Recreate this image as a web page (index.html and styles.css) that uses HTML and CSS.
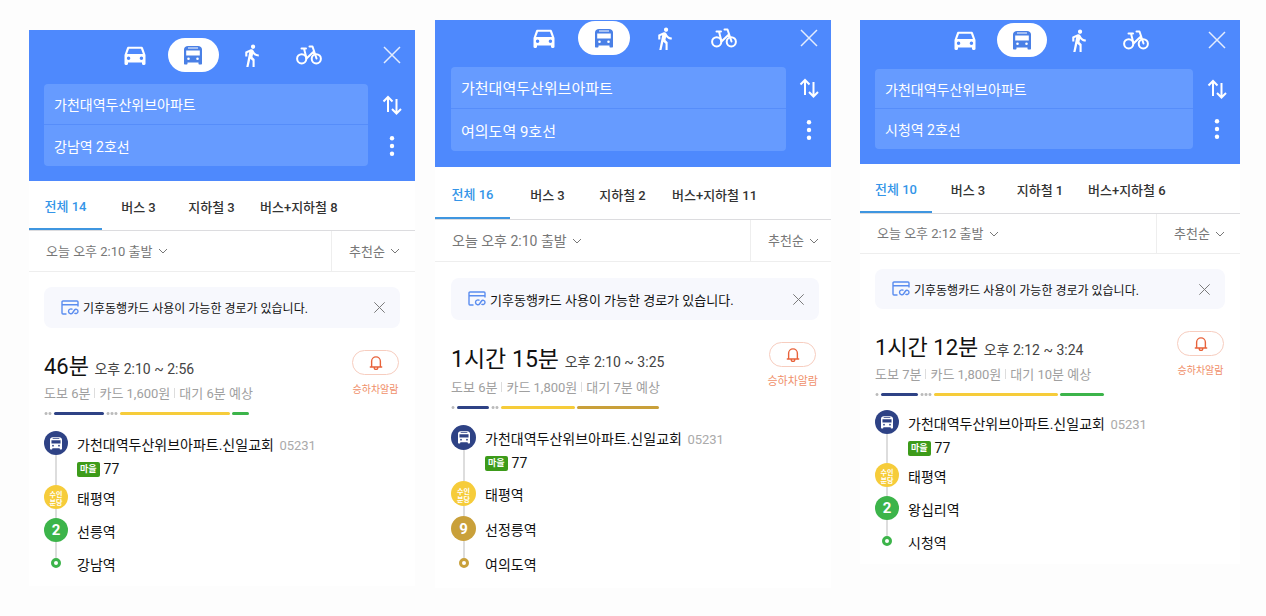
FILE: index.html
```html
<!DOCTYPE html>
<html lang="ko">
<head>
  <meta charset="UTF-8" />
  <meta name="viewport" content="width=device-width, initial-scale=1" />
  <title>길찾기 - 대중교통 경로 비교</title>
  <link rel="stylesheet" href="styles.css">
</head>
<body>
  <!-- 공용 아이콘 -->
  <svg class="sprite" aria-hidden="true">
    <symbol id="i-car" viewBox="0 0 24 24"><path fill="currentColor" fill-rule="evenodd" d="M18.900 6c-.2-.6-.8-1-1.400-1h-11c-.7 0-1.200.4-1.400 1L3 12v7.500c0 .6.4 1 1 1h1c.6 0 1-.4 1-1V18.500h12v1c0 .6.4 1 1 1h1c.6 0 1-.4 1-1V12zM6.500 16.200a1.500 1.500 0 1 1 0-3 1.500 1.500 0 0 1 0 3zm11 0a1.500 1.500 0 1 1 0-3 1.500 1.500 0 0 1 0 3zM5.200 11.200L6.900 6.700h10.200l1.700 4.500z"/></symbol>
    <symbol id="i-bus" viewBox="0 0 18 19"><path fill="currentColor" fill-rule="evenodd" d="M4 0h10c2.200 0 4 1.500 4 3.500V17.500c0 .6-.4 1-1 1h-1.500c-.6 0-1-.4-1-1V16.500h-11v1c0 .6-.4 1-1 1H1c-.6 0-1-.4-1-1V3.500C0 1.500 1.800 0 4 0zM4 1.600v1h10v-1zM2.200 4.500v5h13.600v-5zM4.500 11.500a1.300 1.300 0 1 0 0 2.600 1.300 1.300 0 0 0 0-2.600zm9 0a1.300 1.300 0 1 0 0 2.600 1.300 1.300 0 0 0 0-2.600z"/></symbol>
    <symbol id="i-walk" viewBox="0 0 24 24"><path fill="currentColor" d="M13.500 5.500c1.100 0 2-.9 2-2s-.9-2-2-2-2 .9-2 2 .9 2 2 2zM9.800 8.900L7 23h2.100l1.800-8 2.100 2v6h2v-7.500l-2.100-2 .6-3C14.800 12 16.800 13 19 13v-2c-1.900 0-3.500-1-4.300-2.400l-1-1.600c-.4-.6-1-1-1.700-1-.3 0-.5.1-.8.1L6 8.300V13h2V9.600z"/></symbol>
    <symbol id="i-bike" viewBox="0 0 26 20"><g fill="none" stroke="currentColor" stroke-width="2" stroke-linecap="round" stroke-linejoin="round"><circle cx="5.700" cy="13.800" r="4.600"/><circle cx="20.300" cy="13.800" r="4.600"/><path d="M5.500 3.500h4.500M8 3.500l2.500 10L17.300 7M13.500 1.500h3l4 12"/></g></symbol>
    <symbol id="i-close" viewBox="0 0 20 20"><path fill="none" stroke="currentColor" d="M2 2l16 16M18 2L2 18"/></symbol>
    <symbol id="i-swap" viewBox="0 0 20 20"><path fill="none" stroke="currentColor" stroke-width="2" d="M6 17V2M1.500 6.500L6 2l4.500 4.500M14.500 4v14.500M10 14l4.500 4.500L19 14"/></symbol>
    <symbol id="i-more" viewBox="0 0 20 20"><g fill="currentColor"><circle cx="10" cy="2.300" r="2.200"/><circle cx="10" cy="10" r="2.200"/><circle cx="10" cy="17.700" r="2.200"/></g></symbol>
    <symbol id="i-down" viewBox="0 0 10 10"><path fill="none" stroke="currentColor" d="M1 3l4 4 4-4"/></symbol>
    <symbol id="i-card" viewBox="0 0 18 16"><g fill="none" stroke="currentColor" stroke-width="1.400"><path d="M5.500 14H2a1 1 0 0 1-1-1V2a1 1 0 0 1 1-1h14a1 1 0 0 1 1 1v4.500M1 4.800h16"/><path d="M11.500 9.500c-1-1-4-.8-4 1.800s3 3 4 1.700l2-3c1-1.500 3.500-.8 3.500 1.300s-2.500 2.900-3.500 1.500"/></g></symbol>
    <symbol id="i-bell" viewBox="0 0 16 18"><g fill="none" stroke="currentColor" stroke-width="1.600" stroke-linejoin="round" stroke-linecap="round"><path d="M3 13V7a5 5 0 0 1 10 0v6M1.500 13.500h13M6 14c0 3 4 3 4 0"/></g></symbol>
  </svg>

  <main class="board">
    <!-- 강남역 -->
    <section class="phone phone-a">
      <header class="search">
        <nav class="modes" aria-label="이동 수단">
          <button type="button" aria-label="자동차"><svg class="ico-car"><use href="#i-car"/></svg></button>
          <button type="button" class="on" aria-label="대중교통"><svg class="ico-bus"><use href="#i-bus"/></svg></button>
          <button type="button" aria-label="도보"><svg class="ico-walk"><use href="#i-walk"/></svg></button>
          <button type="button" aria-label="자전거"><svg class="ico-bike"><use href="#i-bike"/></svg></button>
        </nav>
        <button type="button" class="close" aria-label="닫기"><svg><use href="#i-close"/></svg></button>
        <form class="fields">
          <input type="text" aria-label="출발지" value="가천대역두산위브아파트" />
          <input type="text" aria-label="도착지" value="강남역 2호선" />
        </form>
        <div class="tools">
          <button type="button" aria-label="출발지 도착지 바꾸기"><svg><use href="#i-swap"/></svg></button>
          <button type="button" aria-label="더보기"><svg><use href="#i-more"/></svg></button>
        </div>
      </header>

      <div class="tabs">
        <button type="button" class="on">전체 14</button>
        <button type="button">버스 3</button>
        <button type="button">지하철 3</button>
        <button type="button">버스+지하철 8</button>
      </div>

      <div class="filters">
        <label class="pick"><select aria-label="출발 시간"><option>오늘 오후 2:10 출발</option></select><svg><use href="#i-down"/></svg></label>
        <label class="pick sort"><select aria-label="정렬"><option>추천순</option></select><svg><use href="#i-down"/></svg></label>
      </div>

      <div class="notice">
        <svg class="ico-card"><use href="#i-card"/></svg>
        <p>기후동행카드 사용이 가능한 경로가 있습니다.</p>
        <button type="button" aria-label="알림 닫기"><svg><use href="#i-close"/></svg></button>
      </div>

      <article class="route">
        <div class="summary">
          <div>
            <h2>46분 <small>오후 2:10 ~ 2:56</small></h2>
            <p class="meta"><span>도보 6분</span><span>카드 1,600원</span><span>대기 6분 예상</span></p>
          </div>
          <button type="button" class="alarm"><span class="bell"><svg><use href="#i-bell"/></svg></span>승하차알람</button>
        </div>
        <div class="bar">
          <span class="walk" style="width: 8px"></span>
          <span class="navy" style="width: 50px"></span>
          <span class="walk" style="width: 12px"></span>
          <span class="yellow" style="width: 110px"></span>
          <span class="green" style="width: 17px"></span>
        </div>
        <ol class="stops">
          <li>
            <span class="rail"><i class="dot navy"><svg><use href="#i-bus"/></svg></i></span>
            <div>
              <p>가천대역두산위브아파트.신일교회 <span class="code">05231</span></p>
              <p class="bus"><b>마을</b>77</p>
            </div>
          </li>
          <li><span class="rail"><i class="dot yellow">수인<br>분당</i></span><p>태평역</p></li>
          <li><span class="rail"><i class="dot green">2</i></span><p>선릉역</p></li>
          <li><span class="rail"><i class="end"></i></span><p>강남역</p></li>
        </ol>
      </article>
    </section>

    <!-- 여의도역 -->
    <section class="phone phone-b">
      <header class="search">
        <nav class="modes" aria-label="이동 수단">
          <button type="button" aria-label="자동차"><svg class="ico-car"><use href="#i-car"/></svg></button>
          <button type="button" class="on" aria-label="대중교통"><svg class="ico-bus"><use href="#i-bus"/></svg></button>
          <button type="button" aria-label="도보"><svg class="ico-walk"><use href="#i-walk"/></svg></button>
          <button type="button" aria-label="자전거"><svg class="ico-bike"><use href="#i-bike"/></svg></button>
        </nav>
        <button type="button" class="close" aria-label="닫기"><svg><use href="#i-close"/></svg></button>
        <form class="fields">
          <input type="text" aria-label="출발지" value="가천대역두산위브아파트" />
          <input type="text" aria-label="도착지" value="여의도역 9호선" />
        </form>
        <div class="tools">
          <button type="button" aria-label="출발지 도착지 바꾸기"><svg><use href="#i-swap"/></svg></button>
          <button type="button" aria-label="더보기"><svg><use href="#i-more"/></svg></button>
        </div>
      </header>

      <div class="tabs">
        <button type="button" class="on">전체 16</button>
        <button type="button">버스 3</button>
        <button type="button">지하철 2</button>
        <button type="button">버스+지하철 11</button>
      </div>

      <div class="filters">
        <label class="pick"><select aria-label="출발 시간"><option>오늘 오후 2:10 출발</option></select><svg><use href="#i-down"/></svg></label>
        <label class="pick sort"><select aria-label="정렬"><option>추천순</option></select><svg><use href="#i-down"/></svg></label>
      </div>

      <div class="notice">
        <svg class="ico-card"><use href="#i-card"/></svg>
        <p>기후동행카드 사용이 가능한 경로가 있습니다.</p>
        <button type="button" aria-label="알림 닫기"><svg><use href="#i-close"/></svg></button>
      </div>

      <article class="route">
        <div class="summary">
          <div>
            <h2>1시간 15분 <small>오후 2:10 ~ 3:25</small></h2>
            <p class="meta"><span>도보 6분</span><span>카드 1,800원</span><span>대기 7분 예상</span></p>
          </div>
          <button type="button" class="alarm"><span class="bell"><svg><use href="#i-bell"/></svg></span>승하차알람</button>
        </div>
        <div class="bar">
          <span class="walk" style="width: 4px"></span>
          <span class="navy" style="width: 32px"></span>
          <span class="walk" style="width: 8px"></span>
          <span class="yellow" style="width: 74px"></span>
          <span class="gold" style="width: 82px"></span>
        </div>
        <ol class="stops">
          <li>
            <span class="rail"><i class="dot navy"><svg><use href="#i-bus"/></svg></i></span>
            <div>
              <p>가천대역두산위브아파트.신일교회 <span class="code">05231</span></p>
              <p class="bus"><b>마을</b>77</p>
            </div>
          </li>
          <li><span class="rail"><i class="dot yellow">수인<br>분당</i></span><p>태평역</p></li>
          <li><span class="rail"><i class="dot gold">9</i></span><p>선정릉역</p></li>
          <li><span class="rail"><i class="end"></i></span><p>여의도역</p></li>
        </ol>
      </article>
    </section>

    <!-- 시청역 -->
    <section class="phone phone-c">
      <header class="search">
        <nav class="modes" aria-label="이동 수단">
          <button type="button" aria-label="자동차"><svg class="ico-car"><use href="#i-car"/></svg></button>
          <button type="button" class="on" aria-label="대중교통"><svg class="ico-bus"><use href="#i-bus"/></svg></button>
          <button type="button" aria-label="도보"><svg class="ico-walk"><use href="#i-walk"/></svg></button>
          <button type="button" aria-label="자전거"><svg class="ico-bike"><use href="#i-bike"/></svg></button>
        </nav>
        <button type="button" class="close" aria-label="닫기"><svg><use href="#i-close"/></svg></button>
        <form class="fields">
          <input type="text" aria-label="출발지" value="가천대역두산위브아파트" />
          <input type="text" aria-label="도착지" value="시청역 2호선" />
        </form>
        <div class="tools">
          <button type="button" aria-label="출발지 도착지 바꾸기"><svg><use href="#i-swap"/></svg></button>
          <button type="button" aria-label="더보기"><svg><use href="#i-more"/></svg></button>
        </div>
      </header>

      <div class="tabs">
        <button type="button" class="on">전체 10</button>
        <button type="button">버스 3</button>
        <button type="button">지하철 1</button>
        <button type="button">버스+지하철 6</button>
      </div>

      <div class="filters">
        <label class="pick"><select aria-label="출발 시간"><option>오늘 오후 2:12 출발</option></select><svg><use href="#i-down"/></svg></label>
        <label class="pick sort"><select aria-label="정렬"><option>추천순</option></select><svg><use href="#i-down"/></svg></label>
      </div>

      <div class="notice">
        <svg class="ico-card"><use href="#i-card"/></svg>
        <p>기후동행카드 사용이 가능한 경로가 있습니다.</p>
        <button type="button" aria-label="알림 닫기"><svg><use href="#i-close"/></svg></button>
      </div>

      <article class="route">
        <div class="summary">
          <div>
            <h2>1시간 12분 <small>오후 2:12 ~ 3:24</small></h2>
            <p class="meta"><span>도보 7분</span><span>카드 1,800원</span><span>대기 10분 예상</span></p>
          </div>
          <button type="button" class="alarm"><span class="bell"><svg><use href="#i-bell"/></svg></span>승하차알람</button>
        </div>
        <div class="bar">
          <span class="walk" style="width: 4px"></span>
          <span class="navy" style="width: 37px"></span>
          <span class="walk" style="width: 12px"></span>
          <span class="yellow" style="width: 124px"></span>
          <span class="green" style="width: 44px"></span>
        </div>
        <ol class="stops">
          <li>
            <span class="rail"><i class="dot navy"><svg><use href="#i-bus"/></svg></i></span>
            <div>
              <p>가천대역두산위브아파트.신일교회 <span class="code">05231</span></p>
              <p class="bus"><b>마을</b>77</p>
            </div>
          </li>
          <li><span class="rail"><i class="dot yellow">수인<br>분당</i></span><p>태평역</p></li>
          <li><span class="rail"><i class="dot green">2</i></span><p>왕십리역</p></li>
          <li><span class="rail"><i class="end"></i></span><p>시청역</p></li>
        </ol>
      </article>
    </section>
  </main>
</body>
</html>
```

FILE: styles.css
```css
* {
  box-sizing: border-box;
}

body {
  margin: 0;
  background: #fdfdfd;
  color: #111;
  font-family: Roboto, "Noto Sans CJK KR", sans-serif;
  font-size: 14px;
}

p, h2, ol {
  margin: 0;
  padding: 0;
}

button, input, select {
  font: inherit;
  color: inherit;
  border: 0;
  padding: 0;
  margin: 0;
  background: none;
}

button {
  cursor: pointer;
}

svg {
  display: block;
  flex: none;
}

.sprite {
  position: absolute;
  width: 0;
  height: 0;
}

.board {
  display: grid;
  grid-template-columns: 386fr 396fr 389fr;
  gap: 20px;
  align-items: start;
  padding: 20px 26px 20px 29px;
}

/* Each panel keeps its own scale */
.phone {
  --head-top: 8px;
  --head-bottom: 15px;
  --side: 47px;
  --row: 41px;
  --mode: 51px;
  --mode-gap: 7px;
  --tab: 73px;
  --tab-height: 50px;
  --filter-height: 41px;
  --space: 15px;
  --edge: 15px;
  --field-text: 14px;
  --filter-text: 13px;
  --note-text: 12px;
  --note-height: 41px;
  --title-text: 22px;
  --title-line: 30px;
  --alarm-text: 10px;
  --dot: 24px;
  --stops-gap: 16px;
  --first-stop: 54px;
  --stop: 33px;
  --end: #3cb44a;
  background: #fff;
}

.phone-a {
  margin-top: 10px;
}

.phone-b {
  --head-top: 1px;
  --head-bottom: 16px;
  --side: 45px;
  --row: 42px;
  --mode: 52px;
  --mode-gap: 8px;
  --tab: 75px;
  --tab-height: 53px;
  --filter-height: 42px;
  --space: 16px;
  --edge: 12px;
  --field-text: 15px;
  --filter-text: 14px;
  --note-text: 13px;
  --note-height: 42px;
  --title-text: 23px;
  --title-line: 32px;
  --alarm-text: 11px;
  --dot: 25px;
  --first-stop: 56px;
  --stop: 35px;
  --end: #c9a03a;
}

.phone-c {
  --head-top: 3px;
  --row: 40px;
  --mode: 50px;
  --mode-gap: 7px;
  --tab: 72px;
  --filter-height: 40px;
  --note-height: 40px;
  --title-line: 29px;
  --stops-gap: 14px;
  --first-stop: 53px;
  margin-left: 9px;
}

/* Search header */
.search {
  display: grid;
  grid-template-columns: 47px 1fr var(--side);
  padding: var(--head-top) 0 var(--head-bottom);
  background: #4e89fd;
  color: #fff;
}

.modes {
  grid-column: 2;
  display: flex;
  justify-content: center;
  gap: var(--mode-gap);
  margin-bottom: 12px;
}

.modes button {
  display: grid;
  place-items: center;
  width: var(--mode);
  height: 34px;
  border-radius: 17px;
}

.modes .on {
  background: #fff;
  color: #4a80e6;
}

.ico-car { width: 28px; height: 28px; }
.ico-bus { width: 18px; height: 19px; }
.ico-walk { width: 25px; height: 25px; }
.ico-bike { width: 26px; height: 20px; }

.close, .tools button {
  display: grid;
  place-items: center;
}

.close {
  height: 34px;
}

.close svg {
  width: 20px;
  height: 20px;
  stroke-width: 1.5;
  opacity: 0.85;
}

.tools svg {
  width: 20px;
  height: 20px;
}

.fields {
  grid-column: 1 / 3;
  margin-left: var(--space);
  background: #669bff;
  border-radius: 4px;
}

.fields input {
  display: block;
  width: 100%;
  height: var(--row);
  padding: 0 10px;
  font-size: var(--field-text);
}

.fields input:first-child {
  border-bottom: 1px solid #568dfa;
}

.tools {
  display: grid;
  grid-template-rows: 1fr 1fr;
}

/* Tabs */
.tabs {
  display: flex;
  height: var(--tab-height);
  border-bottom: 1px solid #dcdcdf;
}

.tabs button {
  min-width: var(--tab);
  padding: 2px 12px 0;
  font-size: 13px;
  font-weight: 500;
  color: #333;
  white-space: nowrap;
}

.tabs .on {
  color: #3495e8;
  border-bottom: 2px solid #3f96e0;
}

/* Filters */
.filters {
  display: flex;
  justify-content: space-between;
  height: var(--filter-height);
  border-bottom: 1px solid #eee;
  color: #777;
  font-size: var(--filter-text);
}

.pick {
  display: flex;
  align-items: center;
  gap: 5px;
  padding-left: 17px;
}

.pick select {
  appearance: none;
}

.pick svg {
  width: 10px;
  height: 10px;
}

.sort {
  border-left: 1px solid #eee;
  padding-right: var(--edge);
  font-size: 13px;
}

/* Notice */
.notice {
  display: flex;
  align-items: center;
  gap: 4px;
  height: var(--note-height);
  margin: var(--space) var(--edge) 0 var(--space);
  padding: 0 14px 0 17px;
  background: #f7f8fd;
  border-radius: 8px;
  font-size: var(--note-text);
}

.notice p {
  flex: 1;
}

.ico-card {
  width: 18px;
  height: 16px;
  color: #5b8def;
}

.notice button svg {
  width: 13px;
  height: 13px;
  color: #777;
  stroke-width: 1.5;
}

/* Route */
.route {
  padding: 22px calc(var(--edge) + 1px) 2px var(--space);
}

.summary {
  display: flex;
  justify-content: space-between;
  align-items: flex-start;
}

h2 {
  padding-top: 2px;
  font-size: var(--title-text);
  font-weight: 400;
  line-height: var(--title-line);
}

h2 small {
  font-size: 14px;
  color: #444;
}

.meta {
  display: flex;
  align-items: center;
  font-size: 13px;
  line-height: 20px;
  color: #a0a0a0;
}

.meta span + span::before {
  content: "";
  display: inline-block;
  width: 1px;
  height: 10px;
  margin: 0 4px;
  background: #ddd;
}

.alarm {
  display: grid;
  gap: 7px;
  justify-items: center;
  color: #f0906a;
  font-size: var(--alarm-text);
  line-height: 15px;
}

.bell {
  display: grid;
  place-items: center;
  width: 47px;
  height: 25px;
  border: 1px solid #f7cdbf;
  border-radius: 13px;
  color: #e8623a;
}

.bell svg {
  width: 14px;
  height: 16px;
}

.bar {
  display: flex;
  gap: 2px;
  margin-top: 8px;
}

.bar span {
  height: 3px;
  border-radius: 2px;
}

.bar .walk {
  background: radial-gradient(circle, #bbb 1px, transparent 2px) 0 0 / 4px 3px;
}

.navy { background: #2e4285; }
.yellow { background: #f6cc3a; }
.green { background: #3cb44a; }
.gold { background: #c9a03a; }

/* Stops */
.stops {
  margin-top: var(--stops-gap);
  list-style: none;
}

.stops li {
  display: flex;
  gap: 9px;
  min-height: var(--stop);
  line-height: 24px;
}

.stops li:first-child {
  min-height: var(--first-stop);
}

.stops li > p, .stops li > div {
  padding-top: 2px;
}

.rail {
  display: flex;
  flex-direction: column;
  align-items: center;
  width: var(--dot);
}

.rail::after {
  content: "";
  flex: 1;
  width: 2px;
  background: #ddd;
}

.stops li:last-child .rail::before {
  content: "";
  width: 2px;
  height: 7px;
  background: #ddd;
}

.stops li:last-child .rail::after {
  display: none;
}

.dot {
  display: grid;
  place-items: center;
  place-content: center;
  width: var(--dot);
  height: var(--dot);
  border-radius: 50%;
  color: #fff;
  font-size: 15px;
  font-style: normal;
  font-weight: 700;
}

.dot svg {
  width: 12px;
  height: 13px;
}

.dot.yellow {
  display: block;
  padding-top: 4px;
  font-size: 7px;
  line-height: 8px;
  text-align: center;
}

.end {
  width: 10px;
  height: 10px;
  border: 3px solid var(--end);
  border-radius: 50%;
  background: #fff;
}

.code {
  margin-left: 2px;
  font-size: 13px;
  color: #aaa;
}

.bus {
  display: flex;
  align-items: center;
  gap: 4px;
  line-height: 22px;
}

.bus b {
  padding: 0 3px;
  border-radius: 2px;
  background: #3d9b1a;
  color: #fff;
  font-size: 9px;
  line-height: 15px;
}
```
